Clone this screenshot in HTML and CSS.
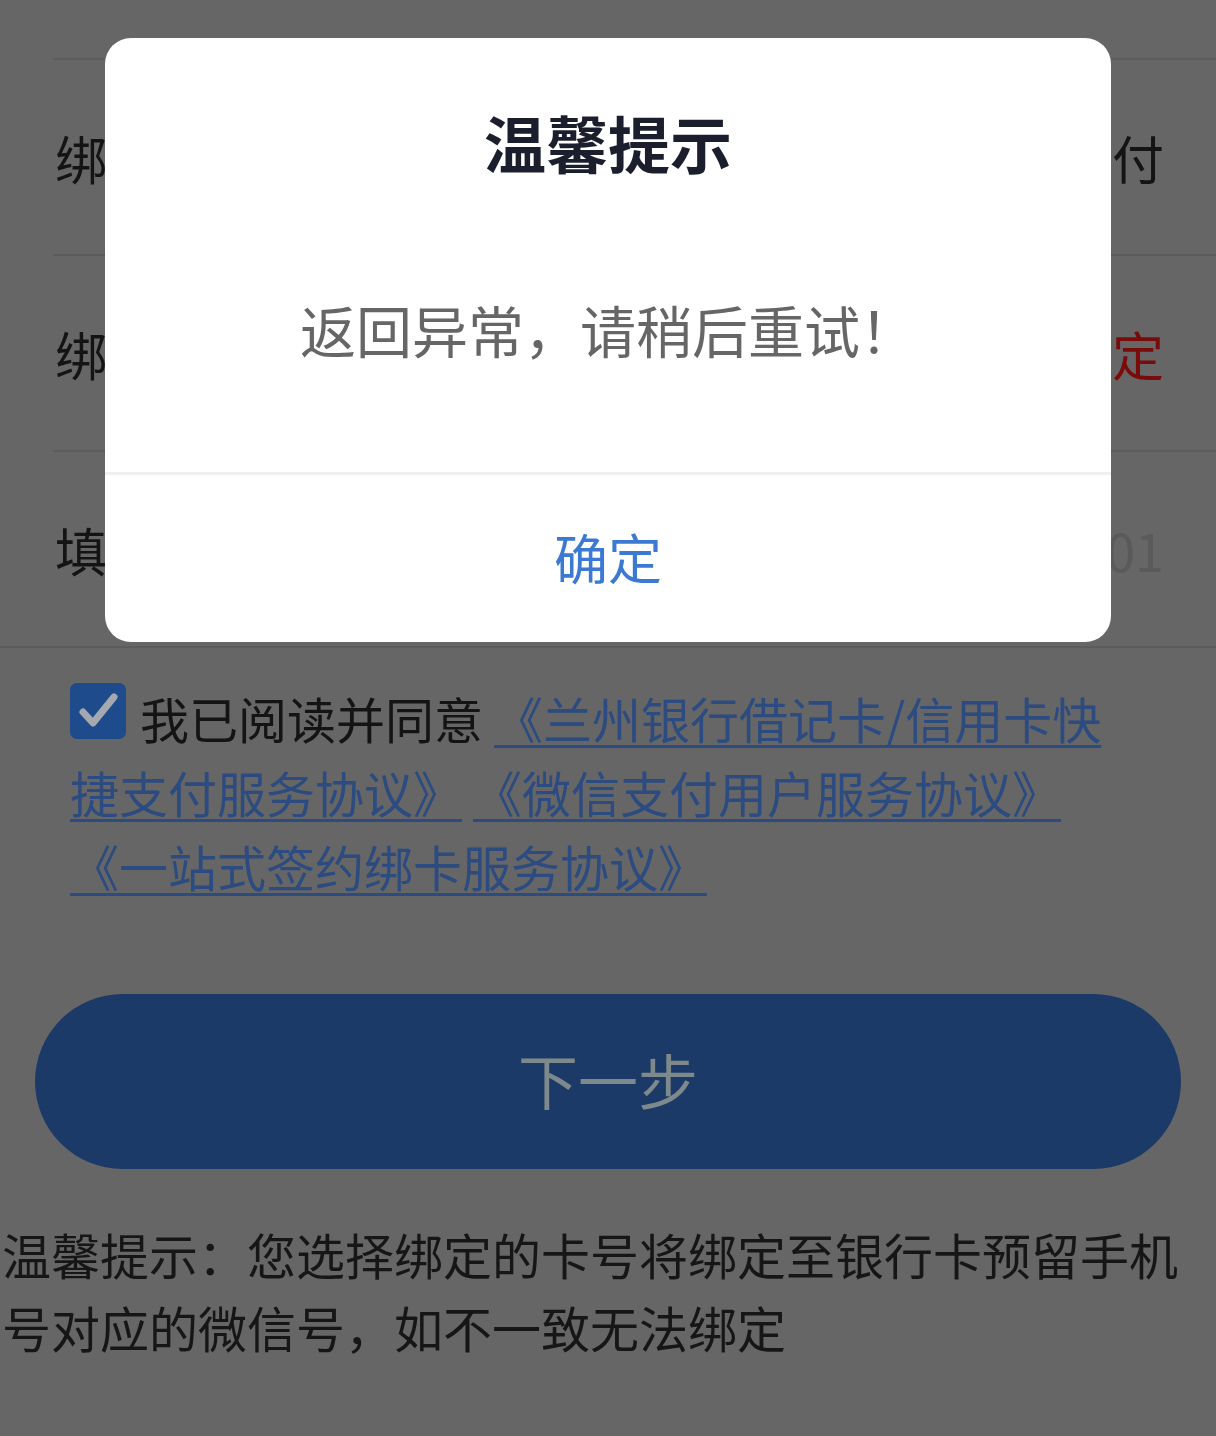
FILE: index.html
```html
<!DOCTYPE html>
<html lang="zh-CN">
<head>
<meta charset="utf-8">
<title>绑定银行卡</title>
<link rel="stylesheet" href="styles.css">
</head>
<body>
<div class="page">
  <div class="form">
    <div class="row">
      <span class="label">绑定场景</span>
      <span class="value">微信支付</span>
    </div>
    <div class="row">
      <span class="label">绑定方式</span>
      <span class="value value-red">一站式签约绑定</span>
    </div>
    <div class="row">
      <span class="label">填写手机号</span>
      <span class="value value-placeholder">例：138****0001</span>
    </div>
  </div>

  <p class="agree"><span class="checkbox"><svg viewBox="0 0 56 56" width="56" height="56"><rect x="0" y="0" width="56" height="56" rx="7" fill="#1d4b8c"/><path d="M13 29 L23 40 L44 14" fill="none" stroke="#a4a9b0" stroke-width="7" stroke-linecap="round" stroke-linejoin="round"/></svg></span>我已阅读并同意 <a class="link" href="#">《兰州银行借记卡/信用卡快捷支付服务协议》</a> <a class="link" href="#">《微信支付用户服务协议》</a> <a class="link" href="#">《一站式签约绑卡服务协议》</a></p>

  <div class="next-btn">下一步</div>

  <p class="tips">温馨提示：您选择绑定的卡号将绑定至银行卡预留手机号对应的微信号，如不一致无法绑定</p>

  <div class="modal">
    <div class="modal-title">温馨提示</div>
    <div class="modal-msg">返回异常，请稍后重试！</div>
    <div class="modal-footer">确定</div>
  </div>
</div>
</body>
</html>
```

FILE: styles.css
```css
html, body {
  margin: 0;
  padding: 0;
  background: #666666;
}

body {
  font-family: "Noto Sans CJK SC", "Noto Sans", sans-serif;
  color: #141414;
}

.page {
  position: relative;
  width: 1216px;
  min-height: 1436px;
  padding-top: 58px;
  box-sizing: border-box;
}

.form {
  border-bottom: 2px solid #5c5c5c;
}

.row {
  margin-left: 53px;
  height: 194px;
  border-top: 2px solid #5c5c5c;
  display: flex;
  align-items: center;
  justify-content: space-between;
  padding: 0 52px 0 2px;
  font-size: 52px;
  white-space: nowrap;
}

.label {
  color: #141414;
}

.value {
  color: #141414;
}

.value-red {
  color: #7a0b0b;
}

.value-placeholder {
  color: #5a5a5a;
}

.agree {
  margin: 0;
  padding: 33px 90px 0 70px;
  font-size: 49px;
  line-height: 74px;
  color: #141414;
}

.checkbox {
  display: inline-block;
  width: 56px;
  height: 56px;
  margin-right: 14px;
  vertical-align: baseline;
}

.checkbox svg {
  display: block;
}

.link {
  color: #2c4b80;
  text-decoration: underline;
  text-decoration-thickness: 3px;
  text-underline-offset: 6px;
}

.next-btn {
  margin: 91px 35px 0 35px;
  height: 175px;
  border-radius: 88px;
  background: #1c3a68;
  color: #7e898c;
  font-size: 60px;
  display: flex;
  align-items: center;
  justify-content: center;
  padding-bottom: 6px;
  box-sizing: border-box;
}

.tips {
  margin: 48px 0 0 0;
  padding-left: 2px;
  font-size: 49px;
  line-height: 73px;
  color: #161616;
}

.modal {
  position: absolute;
  top: 38px;
  left: 105px;
  width: 1006px;
  height: 604px;
  background: #ffffff;
  border-radius: 26px;
  text-align: center;
  overflow: hidden;
}

.modal-title {
  margin-top: 64px;
  height: 80px;
  line-height: 80px;
  font-size: 62px;
  font-weight: 700;
  color: #1b1e2c;
}

.modal-msg {
  margin-top: 107px;
  height: 80px;
  line-height: 80px;
  font-size: 56px;
  color: #666666;
  padding-bottom: 103px;
  border-bottom: 3px solid #efefef;
}

.modal-footer {
  height: 164px;
  line-height: 164px;
  font-size: 54px;
  color: #3b79d3;
}
```
